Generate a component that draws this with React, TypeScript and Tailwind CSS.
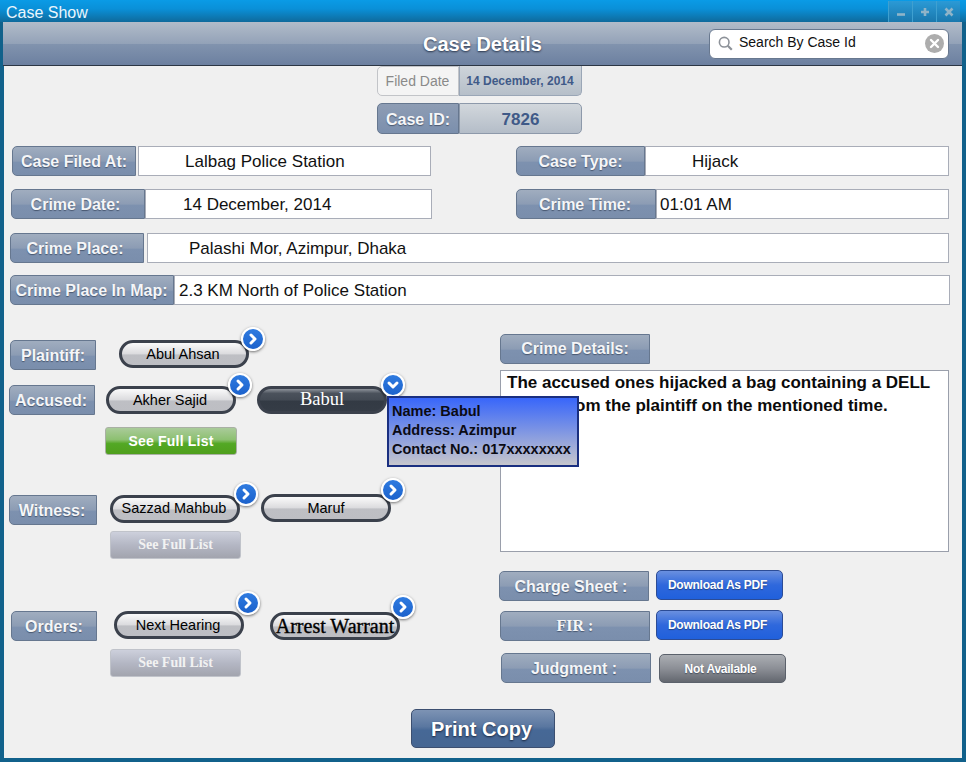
import React from "react";

const shadow = "[text-shadow:0_1px_1px_rgba(30,40,60,0.55)]";

function Label({ children, className = "" }: { children: React.ReactNode; className?: string }) {
  return (
    <div
      className={`flex h-[30px] shrink-0 items-center justify-center rounded-l-[5px] border border-[#66778f] bg-[linear-gradient(#a0adbf,#8c9cb4_50%,#7d91af_55%,#7a8eac)] pt-[2px] text-[16px] font-bold text-[#f5f6f8] ${shadow} ${className}`}
    >
      {children}
    </div>
  );
}

function Field({ children, className = "" }: { children: React.ReactNode; className?: string }) {
  return (
    <div className={`flex h-[30px] shrink-0 items-center border border-[#a9adb8] bg-white pt-[2px] text-[17px] text-[#111] ${className}`}>
      {children}
    </div>
  );
}

function Badge({ open = false, className = "" }: { open?: boolean; className?: string }) {
  return (
    <span className={`absolute flex h-[24px] w-[24px] items-center justify-center rounded-full border-2 border-white bg-[linear-gradient(#2f7be0,#1c62cc)] shadow-[0_1px_3px_rgba(0,0,0,0.55)] ${className}`}>
      <svg width="14" height="14" viewBox="0 0 14 14" fill="none" stroke="#fff" strokeWidth="3" strokeLinecap="round" strokeLinejoin="round">
        {open ? <path d="M3 5l4 4 4-4" /> : <path d="M5 3l4 4-4 4" />}
      </svg>
    </span>
  );
}

function Pill({
  children,
  className = "",
  badge,
  dark = false,
  open = false,
}: {
  children: React.ReactNode;
  className?: string;
  badge: string;
  dark?: boolean;
  open?: boolean;
}) {
  return (
    <div
      className={`relative flex h-[28px] w-[130px] shrink-0 items-center justify-center rounded-[14px] border-[3px] border-[#3b414c] ${
        dark
          ? "bg-[linear-gradient(#8d929a_0,#4b525c_20%,#434a54_50%,#333a44_55%,#353c46)] text-white"
          : "bg-[linear-gradient(#fafafa,#dcdcdf_48%,#bebfc4_55%,#bdbec3)] text-black"
      } ${className}`}
    >
      {children}
      <Badge open={open} className={badge} />
    </div>
  );
}

function FullList({ className = "", green = false }: { className?: string; green?: boolean }) {
  return green ? (
    <div className={`flex h-[28px] w-[132px] items-center justify-center rounded-[3px] border border-[#a9b0a4] bg-[linear-gradient(#aacb9a,#8cc070_45%,#53a824_60%,#4f9f1c)] text-[14px] font-bold tracking-[0.2px] text-white ${className}`}>
      See Full List
    </div>
  ) : (
    <div className={`flex h-[28px] w-[131px] items-center justify-center rounded-[3px] border border-[#c0c3ca] bg-[linear-gradient(#cdd0dc,#b4b7c4_50%,#a2a4ae)] pb-[2px] font-['Liberation_Serif',serif] text-[14px] font-bold text-[#f2f2f2] ${className}`}>
      See Full List
    </div>
  );
}

function DocButton({ children, className = "", grey = false }: { children: React.ReactNode; className?: string; grey?: boolean }) {
  return (
    <div
      className={`flex w-[127px] shrink-0 items-center justify-center rounded-[5px] border pr-[4px] text-[12px] font-bold tracking-[-0.25px] text-white ${
        grey
          ? "h-[29px] border-[#5b616b] bg-[linear-gradient(#abaeb3,#8c8f96_50%,#63676f)]"
          : "h-[30px] border-[#2c4c96] bg-[linear-gradient(#6a90e0,#2f68dc_50%,#2060dc)]"
      } ${shadow} ${className}`}
    >
      {children}
    </div>
  );
}

function WinBtn({ children }: { children: React.ReactNode }) {
  return (
    <div className="flex h-[21px] w-[24px] items-center justify-center border-l border-[#3fa0d0] bg-[linear-gradient(#2b9ad6,#1a78ad)]">
      <svg width="12" height="12" viewBox="0 0 12 12" fill="none" stroke="#8fb4c8" strokeWidth="2.6">
        {children}
      </svg>
    </div>
  );
}

export default function App() {
  return (
    <div className="h-[775px] w-[966px] overflow-hidden bg-white font-['Liberation_Sans',Arial,sans-serif]">
      <div className="flex h-[762px] flex-col bg-[#11618b]">
        <div className="flex h-[22px] shrink-0 items-start justify-between bg-[linear-gradient(#0a9be6,#0a90d8_40%,#0f6a9c)] pl-[6px] pr-[6px] pt-px text-[16px] text-[#eaf6fd]">
          <span className="pt-px leading-[22px]">Case Show</span>
          <div className="flex">
            <WinBtn>
              <path d="M2 8.5h8" />
            </WinBtn>
            <WinBtn>
              <path d="M6 2v8M2 6h8" />
            </WinBtn>
            <WinBtn>
              <path d="M2.5 2.5l7 7M9.5 2.5l-7 7" />
            </WinBtn>
          </div>
        </div>

        <div className="ml-[3px] mr-[4px] grid h-[44px] shrink-0 grid-cols-[1fr_auto_1fr] items-center border-b border-[#2c3644] bg-[linear-gradient(#b2bcc9,#93a2b8_50%,#8193ae_52%,#6c80a0)]">
          <div />
          <div className="text-[20px] font-bold text-white [text-shadow:0_1px_2px_rgba(20,30,50,0.8)]">Case Details</div>
          <div className="flex justify-end pr-[13px]">
            <div className="flex h-[30px] w-[240px] items-center rounded-[6px] border border-[#68788f] bg-white pl-[8px] pr-[4px] text-[14px] text-[#111]">
              <svg width="15" height="15" viewBox="0 0 15 15" fill="none" stroke="#8d9299" strokeWidth="1.6" className="mr-[6px]">
                <circle cx="6.2" cy="6.2" r="4.8" />
                <path d="M9.8 9.8l4 4" strokeWidth="2.2" />
              </svg>
              <span className="flex-1 pb-[2px]">Search By Case Id</span>
              <span className="flex h-[19px] w-[19px] items-center justify-center rounded-full bg-[#adadad]">
                <svg width="11" height="11" viewBox="0 0 11 11" stroke="#fff" strokeWidth="2.4" strokeLinecap="round">
                  <path d="M2 2l7 7M9 2l-7 7" />
                </svg>
              </span>
            </div>
          </div>
        </div>

        <div className="ml-[4px] mr-[4px] mb-[4px] flex flex-1 flex-col bg-[#f0f0f0]">
          <div className="ml-[373px] flex h-[30px] w-[205px]">
            <div className="flex w-[82px] items-center justify-center rounded-l-[5px] border border-[#c2c4c8] bg-[#f4f4f4] pr-px text-[14px] text-[#8a8a8a]">Filed Date</div>
            <div className="flex flex-1 items-center justify-center rounded-br-[5px] border border-t-0 border-[#9aa6b6] bg-[linear-gradient(#ced4da,#b6bfc9)] pr-px text-[12px] font-bold text-[#3f5a88]">14 December, 2014</div>
          </div>

          <div className="ml-[373px] mt-[7px] flex h-[31px] w-[205px]">
            <div className={`flex w-[82px] items-center justify-center rounded-l-[5px] border border-[#66778f] bg-[linear-gradient(#8e9db4,#7b8fad)] pt-[2px] text-[16px] font-bold text-[#f5f6f8] ${shadow}`}>Case ID:</div>
            <div className="flex flex-1 items-center justify-center rounded-r-[5px] border border-[#8d99aa] bg-[linear-gradient(#d2d7dc,#b4bdc8)] pt-[2px] text-[17px] font-bold text-[#3f5a88]">7826</div>
          </div>

          <div className="mt-[12px] flex">
            <Label className="ml-[8px] w-[124px]">Case Filed At:</Label>
            <Field className="ml-[2px] w-[293px] pl-[46px]">Lalbag Police Station</Field>
            <Label className="ml-[85px] w-[129px]">Case Type:</Label>
            <Field className="w-[304px] pl-[46px]">Hijack</Field>
          </div>

          <div className="mt-[13px] flex">
            <Label className="ml-[7px] w-[134px] pr-[5px]">Crime Date:</Label>
            <Field className="w-[287px] pl-[37px]">14 December, 2014</Field>
            <Label className="ml-[84px] w-[140px] pr-[2px]">Crime Time:</Label>
            <Field className="w-[293px] pl-[3px]">01:01 AM</Field>
          </div>

          <div className="mt-[14px] flex">
            <Label className="ml-[6px] w-[134px] pr-[4px]">Crime Place:</Label>
            <Field className="ml-[3px] w-[802px] pl-[41px]">Palashi Mor, Azimpur, Dhaka</Field>
          </div>

          <div className="mt-[12px] flex">
            <Label className="ml-[6px] w-[164px] pr-px">Crime Place In Map:</Label>
            <Field className="w-[776px] pl-[4px]">2.3 KM North of Police Station</Field>
          </div>

          <div className="flex">
            <div className="w-[495px] shrink-0">
              <div className="mt-[35px] flex">
                <Label className="ml-[6px] w-[86px]">Plaintiff:</Label>
                <Pill className="ml-[23px] pr-[2px] pt-[2px] text-[14.5px]" badge="-right-[19px] -top-[16px]">Abul Ahsan</Pill>
              </div>

              <div className="mt-[15px] flex items-start">
                <Label className="ml-[5px] w-[86px] pr-[2px]">Accused:</Label>
                <Pill className="ml-[11px] mt-px pr-[2px] pt-[2px] text-[14.5px]" badge="-right-[19px] -top-[16px]">Akher Sajid</Pill>
                <Pill dark open className="ml-[21px] mt-px font-['Liberation_Serif',serif] text-[18.5px]" badge="-right-[21px] -top-[16px]">
                  Babul
                  <div className="absolute left-[127px] top-[7px] z-10 h-[71px] w-[192px] border-[2px] border-[#1a2f80] bg-[linear-gradient(#3866fa,#c6c6cc)] pl-[3px] pt-[4px] font-['Liberation_Sans',sans-serif] text-[14.5px] font-bold leading-[19px] text-[#0b0b14]">
                    <div>Name: Babul</div>
                    <div>Address: Azimpur</div>
                    <div>Contact No.: 017xxxxxxxx</div>
                  </div>
                </Pill>
              </div>

              <FullList green className="ml-[101px] mt-[12px]" />

              <div className="mt-[40px] flex items-start">
                <Label className="ml-[5px] w-[88px] pr-[2px]">Witness:</Label>
                <Pill className="ml-[13px] pr-[2px] text-[14.5px]" badge="-right-[21px] -top-[16px]">Sazzad Mahbub</Pill>
                <Pill className="ml-[21px] -mt-px pt-[2px] text-[14.5px]" badge="-right-[17px] -top-[19px]">Maruf</Pill>
              </div>

              <FullList className="ml-[106px] mt-[6px]" />

              <div className="mt-[52px] flex items-start">
                <Label className="ml-[7px] w-[86px]">Orders:</Label>
                <Pill className="ml-[17px] pr-[2px] pt-[2px] text-[14.5px]" badge="-right-[19px] -top-[23px]">Next Hearing</Pill>
                <Pill className="ml-[26px] mt-px font-['Liberation_Serif',serif] text-[20px] [-webkit-text-stroke:0.35px_black]" badge="-right-[18px] -top-[20px]">Arrest Warrant</Pill>
              </div>

              <FullList className="ml-[106px] mt-[8px]" />
            </div>

            <div className="flex-1">
              <Label className="ml-px mt-[29px] w-[150px] !pt-0">Crime Details:</Label>
              <div className="ml-px mt-[6px] h-[182px] w-[449px] border border-[#9a9fab] bg-white px-[6px] text-[17px] font-bold leading-[23px] text-[#0b0b0b]">
                The accused ones hijacked a bag containing a DELL laptop from the plaintiff on the mentioned time.
              </div>
              <div className="mt-[19px] flex items-start">
                <Label className="w-[150px] pr-[6px]">Charge Sheet :</Label>
                <DocButton className="ml-[7px] -mt-px">Download As PDF</DocButton>
              </div>
              <div className="mt-[10px] flex items-start">
                <Label className="ml-px w-[150px] !pt-0 font-['Liberation_Serif',serif]">FIR :</Label>
                <DocButton className="ml-[6px] -mt-px">Download As PDF</DocButton>
              </div>
              <div className="mt-[12px] flex items-start">
                <Label className="ml-[2px] w-[150px] pr-[4px]">Judgment :</Label>
                <DocButton grey className="ml-[8px] mt-px">Not Available</DocButton>
              </div>
            </div>
          </div>

          <div className="ml-[407px] mt-[26px] flex h-[39px] w-[144px] items-center justify-center rounded-[5px] border border-[#3c4f70] bg-[linear-gradient(#7d93b4,#5a77a0_45%,#466896_55%,#466692)] pr-[3px] text-[20px] font-bold text-white [text-shadow:0_1px_2px_rgba(10,20,40,0.8)]">
            Print Copy
          </div>
        </div>
      </div>
    </div>
  );
}
